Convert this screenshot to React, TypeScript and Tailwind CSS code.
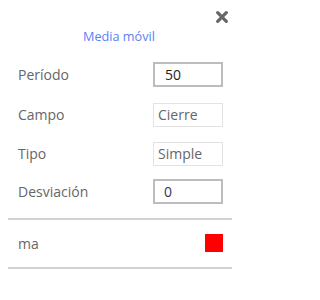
import React from 'react';

const fields = [
  { label: 'Período', value: '50', editable: true, mt: 'mt-[18px]', valueClass: 'text-[#1e1e1e] pl-[10px]' },
  { label: 'Campo', value: 'Cierre', editable: false, mt: 'mt-[15px]', valueClass: 'text-[#666] pl-[4px]' },
  { label: 'Tipo', value: 'Simple', editable: false, mt: 'mt-[14px]', valueClass: 'text-[#666] pl-[4px]' },
  { label: 'Desviación', value: '0', editable: true, mt: 'mt-[13px]', valueClass: 'text-[#2c3550] pl-[9px]' },
];

const App: React.FC = () => {
  return (
    <div className="w-[238px] h-[300px] bg-white font-['Open_Sans',sans-serif] pt-[11px]">
      {/* Close */}
      <div className="flex justify-end pr-[10px]">
        <svg width="12" height="12" viewBox="0 0 12 12">
          <path d="M1.7 1.7 L10.3 10.3 M10.3 1.7 L1.7 10.3" stroke="#666" strokeWidth="3.2" strokeLinecap="round" />
        </svg>
      </div>

      {/* Title */}
      <div className="mt-[5px] text-center text-[12.7px] leading-[16px] text-[#5a82f0]">
        Media móvil
      </div>

      {/* Fields */}
      {fields.map((f) => (
        <div key={f.label} className={`${f.mt} flex items-center justify-between h-[25px] pl-[18px] pr-[15px]`}>
          <span className="text-[14px] text-[#666]">{f.label}</span>
          <div
            className={`w-[70px] flex items-center text-[14px] ${f.valueClass} ${
              f.editable ? 'h-[25px] border-2 border-[#bdbdbd]' : 'h-[24px] border border-[#e3e3e3]'
            }`}
          >
            {f.value}
          </div>
        </div>
      ))}

      {/* Series */}
      <div className="mt-[14px] ml-[8px] mr-[6px] h-[2px] bg-[#d2d2d2]" />
      <div className="mt-[14px] flex items-center justify-between h-[18px] pl-[18px] pr-[15px]">
        <span className="text-[14px] text-[#666]">ma</span>
        <div className="w-[18px] h-[18px] bg-[#ff0000]" />
      </div>
      <div className="mt-[15px] ml-[8px] mr-[6px] h-[2px] bg-[#d2d2d2]" />
    </div>
  );
};

export default App;
